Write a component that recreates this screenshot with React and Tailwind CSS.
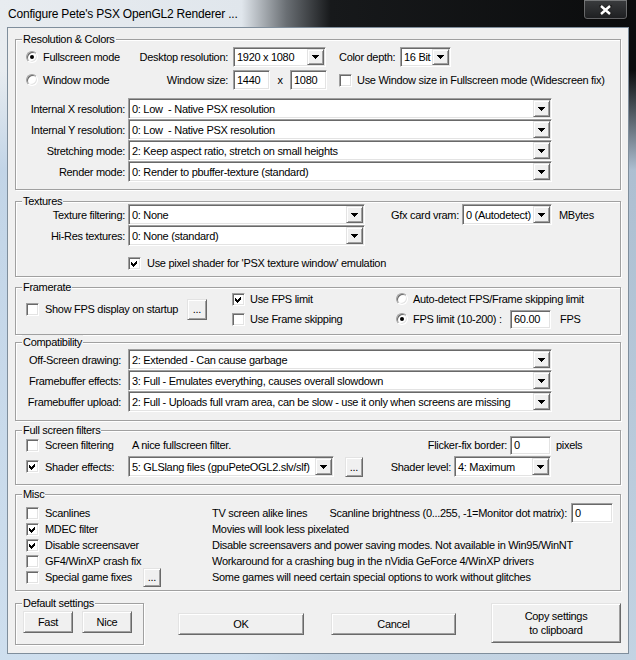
import React from 'react'

const sunken =
  'border border-t-[#a0a0a0] border-l-[#a0a0a0] border-b-white border-r-white shadow-[inset_1px_1px_0_#696969,inset_-1px_-1px_0_#e3e3e3]'
const raised =
  'border border-t-[#e3e3e3] border-l-[#e3e3e3] border-b-[#696969] border-r-[#696969] shadow-[inset_1px_1px_0_#fff,inset_-1px_-1px_0_#a0a0a0]'

function Arrow() {
  return (
    <svg width="7" height="4" viewBox="0 0 7 4" shapeRendering="crispEdges">
      <path d="M0 0H7L4 4H3Z" fill="#000" />
    </svg>
  )
}

function Combo({ className = '', text }) {
  return (
    <div className={`${sunken} bg-white flex p-[1px] shrink-0 ${className}`}>
      <span className="flex-1 pl-[2px] self-center whitespace-pre overflow-hidden">{text}</span>
      <div className={`${raised} bg-[#f0f0f0] w-[17px] shrink-0 flex items-center justify-center`}>
        <Arrow />
      </div>
    </div>
  )
}

function Edit({ className = '', text }) {
  return (
    <div className={`${sunken} bg-white flex items-center pl-[3px] shrink-0 ${className}`}>
      {text}
    </div>
  )
}

function Check({ checked }) {
  return (
    <div className={`${sunken} bg-white w-[13px] h-[13px] shrink-0 flex items-center justify-center`}>
      {checked && (
        <svg width="7" height="7" viewBox="0 0 7 7" shapeRendering="crispEdges">
          <path d="M0 2L2 4L6 0V3L2 7L0 5Z" fill="#000" />
        </svg>
      )}
    </div>
  )
}

function Radio({ checked }) {
  return (
    <div className="w-[12px] h-[12px] shrink-0 rounded-full bg-white border border-t-[#a0a0a0] border-l-[#a0a0a0] border-b-white border-r-white shadow-[inset_1px_1px_0_#696969,inset_-1px_-1px_0_#e3e3e3] flex items-center justify-center">
      {checked && <div className="w-[4px] h-[4px] rounded-full bg-black" />}
    </div>
  )
}

function Btn({ className = '', children }) {
  return (
    <div className={`${raised} bg-[#f0f0f0] shrink-0 flex items-center justify-center text-center ${className}`}>
      {children}
    </div>
  )
}

function Group({ title, className = '', children }) {
  return (
    <div className={`relative border border-[#a0a0a0] shadow-[inset_1px_1px_0_#fff,1px_1px_0_#fff] ${className}`}>
      <span className="absolute -top-[8px] left-[6px] bg-[#f0f0f0] px-[1px] leading-[14px]">{title}</span>
      {children}
    </div>
  )
}

function ComboRow({ label, labelW = 'w-[109px]', gap = 'ml-[3px]', comboW = 'w-[424px]', text }) {
  return (
    <div className="flex items-center">
      <span className={`${labelW} text-right shrink-0`}>{label}</span>
      <Combo className={`${gap} ${comboW} h-[21px]`} text={text} />
    </div>
  )
}

function MiscRow({ checked, label, desc, children }) {
  return (
    <div className="flex items-center h-[16px]">
      <Check checked={checked} />
      <div className="ml-[6px] w-[167px] shrink-0 flex items-center">{label}</div>
      {desc}
      {children}
    </div>
  )
}

export default function App() {
  return (
    <div className="w-[636px] h-[660px] flex flex-col overflow-hidden whitespace-nowrap bg-[linear-gradient(180deg,rgba(0,0,0,0)_0px,rgba(0,0,0,0)_70px,rgba(190,210,230,0.9)_170px,rgba(205,222,238,0.95)_100%),linear-gradient(90deg,#e8ecf0_0%,#e0e6ec_38%,#6a6f74_45%,#17191b_52%,#0b0c0d_100%)] font-['Liberation_Sans',sans-serif] text-[11px] tracking-[-0.3px] leading-[14px] text-black">
      {/* title bar */}
      <div className="h-[27px] flex items-start shrink-0">
        <span className="pl-[8px] pt-[7px] text-[12px] tracking-[-0.2px]">
          Configure Pete's PSX OpenGL2 Renderer ...
        </span>
        <div className="ml-auto mr-[8px] w-[45px] h-[20px] rounded-b-[4px] border border-t-0 border-[#0a0a0a] shadow-[inset_0_0_0_1px_rgba(255,255,255,0.3)] bg-[linear-gradient(180deg,#3a3c3e,#1d1e20)] flex items-center justify-center">
          <svg width="13" height="10" viewBox="0 0 13 10">
            <path d="M2 1L11 9M11 1L2 9" stroke="#222" strokeWidth="4" strokeLinecap="square" />
            <path d="M2 1L11 9M11 1L2 9" stroke="#fff" strokeWidth="2.4" />
          </svg>
        </div>
      </div>

      {/* client */}
      <div className="mx-[7px] w-[622px] h-[627px] border border-[#7f8e9c] bg-[#f0f0f0] px-[7px] pt-[11px] flex flex-col">
        <Group title="Resolution & Colors" className="h-[151px]">
          <div className="pt-[7px] pl-[10px]">
            <div className="flex items-center h-[20px]">
              <div className="w-[112px] flex items-center shrink-0">
                <Radio checked />
                <span className="ml-[5px]">Fullscreen mode</span>
              </div>
              <span className="w-[90px] text-right shrink-0">Desktop resolution:</span>
              <Combo className="ml-[5px] w-[93px] h-[20px]" text="1920 x 1080" />
              <span className="ml-[13px] w-[58px] shrink-0">Color depth:</span>
              <Combo className="ml-[3px] w-[51px] h-[20px]" text="16 Bit" />
            </div>
            <div className="flex items-center h-[20px] mt-[3px]">
              <div className="w-[112px] flex items-center shrink-0">
                <Radio />
                <span className="ml-[5px]">Window mode</span>
              </div>
              <span className="w-[90px] text-right shrink-0">Window size:</span>
              <Edit className="ml-[5px] w-[37px] h-[20px]" text="1440" />
              <span className="w-[20px] text-center shrink-0">x</span>
              <Edit className="w-[37px] h-[20px]" text="1080" />
              <div className="ml-[12px]">
                <Check />
              </div>
              <span className="ml-[5px]">Use Window size in Fullscreen mode (Widescreen fix)</span>
            </div>
          </div>
          <div className="mt-[8px] flex flex-col">
            <ComboRow label="Internal X resolution:" text="0: Low  - Native PSX resolution" />
            <ComboRow label="Internal Y resolution:" text="0: Low  - Native PSX resolution" />
            <ComboRow label="Stretching mode:" text="2: Keep aspect ratio, stretch on small heights" />
            <ComboRow label="Render mode:" text="0: Render to pbuffer-texture (standard)" />
          </div>
        </Group>

        <Group title="Textures" className="h-[76px] mt-[11px]">
          <div className="pt-[2px] flex flex-col">
            <div className="flex items-center">
              <span className="w-[109px] text-right shrink-0">Texture filtering:</span>
              <Combo className="ml-[3px] w-[237px] h-[21px]" text="0: None" />
              <span className="ml-[22px] w-[72px] text-right shrink-0">Gfx card vram:</span>
              <Combo className="ml-[3px] w-[90px] h-[21px]" text="0 (Autodetect)" />
              <span className="ml-[7px]">MBytes</span>
            </div>
            <div className="flex items-center">
              <span className="w-[109px] text-right shrink-0">Hi-Res textures:</span>
              <Combo className="ml-[3px] w-[237px] h-[21px]" text="0: None (standard)" />
            </div>
            <div className="flex items-center mt-[10px] pl-[112px]">
              <Check checked />
              <span className="ml-[6px]">Use pixel shader for 'PSX texture window' emulation</span>
            </div>
          </div>
        </Group>

        <Group title="Framerate" className="h-[48px] mt-[10px]">
          <div className="flex items-start pt-[1px]">
            <div className="h-[40px] flex items-center pl-[10px]">
              <Check />
              <span className="ml-[6px] w-[142px] shrink-0">Show FPS display on startup</span>
              <Btn className="w-[20px] h-[21px]">...</Btn>
            </div>
            <div className="ml-[25px] w-[164px] flex flex-col shrink-0">
              <div className="flex items-center h-[20px]">
                <Check checked />
                <span className="ml-[5px]">Use FPS limit</span>
              </div>
              <div className="flex items-center h-[20px]">
                <Check />
                <span className="ml-[5px]">Use Frame skipping</span>
              </div>
            </div>
            <div className="flex flex-col">
              <div className="flex items-center h-[20px]">
                <Radio />
                <span className="ml-[5px]">Auto-detect FPS/Frame skipping limit</span>
              </div>
              <div className="flex items-center h-[20px]">
                <Radio checked />
                <span className="ml-[5px] w-[92px] shrink-0">FPS limit (10-200) :</span>
                <Edit className="ml-[5px] w-[41px] h-[19px]" text="60.00" />
                <span className="ml-[9px]">FPS</span>
              </div>
            </div>
          </div>
        </Group>

        <Group title="Compatibility" className="h-[79px] mt-[7px]">
          <div className="pt-[6px] flex flex-col">
            <ComboRow label="Off-Screen drawing:" labelW="w-[105px]" gap="ml-[7px]" text="2: Extended - Can cause garbage" />
            <ComboRow label="Framebuffer effects:" labelW="w-[105px]" gap="ml-[7px]" text="3: Full - Emulates everything, causes overall slowdown" />
            <ComboRow label="Framebuffer upload:" labelW="w-[105px]" gap="ml-[7px]" text="2: Full - Uploads full vram area, can be slow - use it only when screens are missing" />
          </div>
        </Group>

        <Group title="Full screen filters" className="h-[55px] mt-[9px]">
          <div className="pt-[4px] pl-[10px] flex flex-col">
            <div className="flex items-center h-[20px]">
              <Check />
              <span className="ml-[6px] w-[87px] shrink-0">Screen filtering</span>
              <span className="w-[230px] shrink-0">A nice fullscreen filter.</span>
              <span className="w-[145px] text-right shrink-0">Flicker-fix border:</span>
              <Edit className="ml-[3px] w-[41px] h-[19px]" text="0" />
              <span className="ml-[5px]">pixels</span>
            </div>
            <div className="flex items-center h-[21px] mt-[1px]">
              <Check checked />
              <span className="ml-[6px] w-[83px] shrink-0">Shader effects:</span>
              <Combo className="w-[206px] h-[21px]" text="5: GLSlang files (gpuPeteOGL2.slv/slf)" />
              <Btn className="ml-[11px] w-[18px] h-[20px]">...</Btn>
              <span className="w-[88px] text-right shrink-0">Shader level:</span>
              <Combo className="ml-[3px] w-[97px] h-[21px]" text="4: Maximum" />
            </div>
          </div>
        </Group>

        <Group title="Misc" className="h-[97px] mt-[9px]">
          <div className="pt-[10px] pl-[10px] flex flex-col">
            <MiscRow
              label="Scanlines"
              desc={<span className="w-[113px] shrink-0">TV screen alike lines</span>}
            >
              <span className="w-[242px] text-right shrink-0">
                Scanline brightness (0...255, -1=Monitor dot matrix):
              </span>
              <Edit className="ml-[4px] w-[42px] h-[20px]" text="0" />
            </MiscRow>
            <MiscRow checked label="MDEC filter" desc={<span>Movies will look less pixelated</span>} />
            <MiscRow
              checked
              label="Disable screensaver"
              desc={<span>Disable screensavers and power saving modes. Not available in Win95/WinNT</span>}
            />
            <MiscRow
              label="GF4/WinXP crash fix"
              desc={<span>Workaround for a crashing bug in the nVidia GeForce 4/WinXP drivers</span>}
            />
            <MiscRow
              label={
                <>
                  <span className="w-[98px] shrink-0">Special game fixes</span>
                  <Btn className="w-[18px] h-[19px]">...</Btn>
                </>
              }
              desc={<span>Some games will need certain special options to work without glitches</span>}
            />
          </div>
        </Group>

        <div className="flex items-start mt-[12px]">
          <Group title="Default settings" className="w-[129px] h-[42px] shrink-0">
            <div className="flex pt-[7px] pl-[7px] gap-[9px]">
              <Btn className="w-[50px] h-[22px]">Fast</Btn>
              <Btn className="w-[50px] h-[22px]">Nice</Btn>
            </div>
          </Group>
          <Btn className="ml-[34px] mt-[10px] w-[126px] h-[22px]">OK</Btn>
          <Btn className="ml-[27px] mt-[10px] w-[125px] h-[22px]">Cancel</Btn>
          <Btn className="ml-[35px] w-[130px] h-[40px] flex-col">
            <span>Copy settings</span>
            <span>to clipboard</span>
          </Btn>
        </div>
      </div>
    </div>
  )
}
